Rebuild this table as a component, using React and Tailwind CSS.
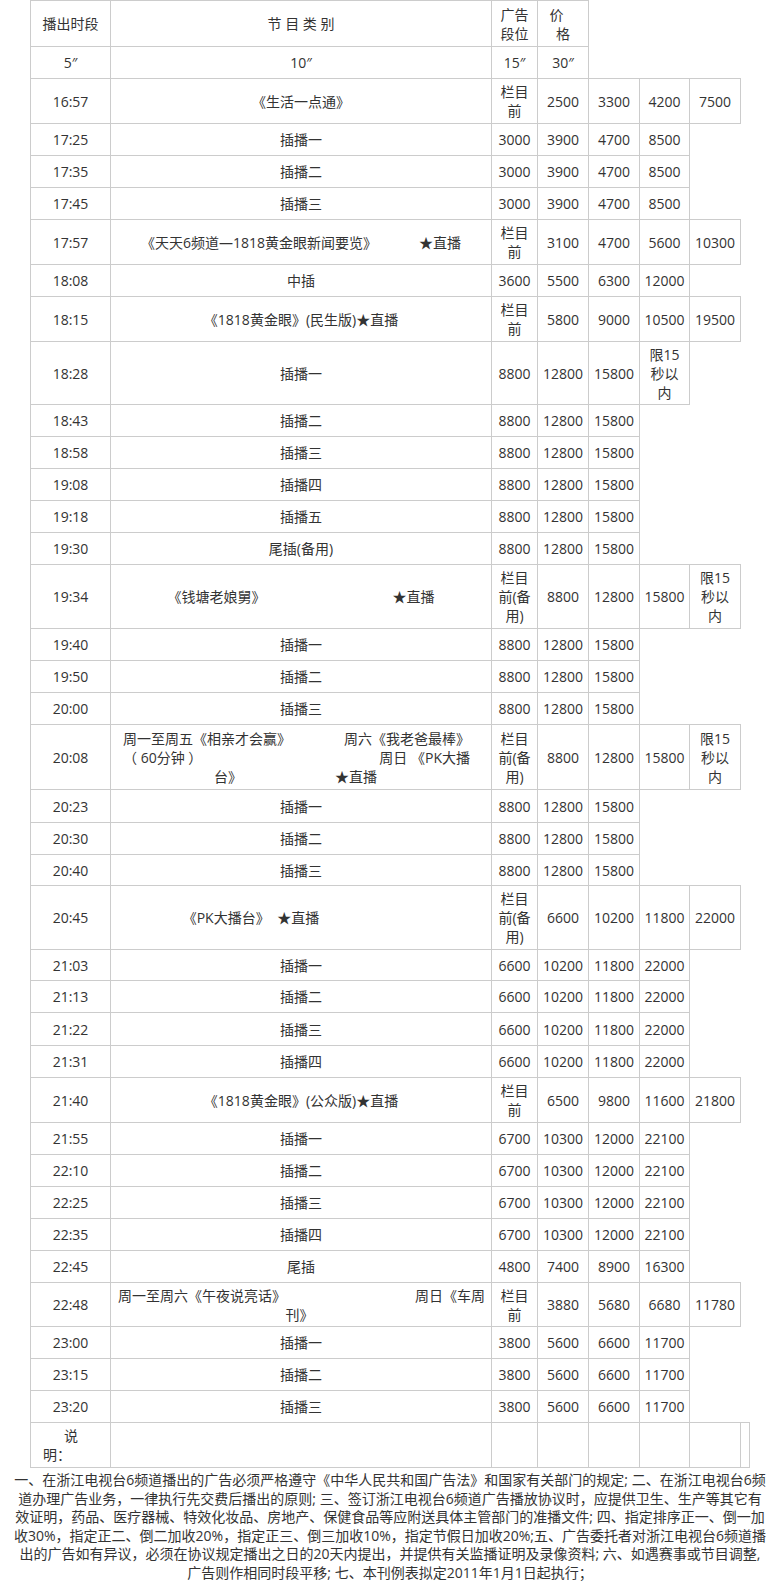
import React from 'react';

const font = { fontFamily: '"Open Sans", "Noto Sans CJK SC", sans-serif' };

const lanmu = (
  <>
    <div>栏目</div>
    <div>前</div>
  </>
);

const lanmuBy = (
  <>
    <div>栏目</div>
    <div>前(备</div>
    <div>用)</div>
  </>
);

const xian = (
  <>
    <div>限15</div>
    <div>秒以</div>
    <div>内</div>
  </>
);

const rows = [
  { t: '16:57', p: '《生活一点通》', c: [lanmu, '2500', '3300', '4200', '7500'], h: 45 },
  { t: '17:25', p: '插播一', c: ['3000', '3900', '4700', '8500'], h: 32 },
  { t: '17:35', p: '插播二', c: ['3000', '3900', '4700', '8500'], h: 32 },
  { t: '17:45', p: '插播三', c: ['3000', '3900', '4700', '8500'], h: 32 },
  {
    t: '17:57',
    p: (
      <>
        《天天6频道—1818黄金眼新闻要览》<span className="inline-block ml-[42px]">★直播</span>
      </>
    ),
    c: [lanmu, '3100', '4700', '5600', '10300'],
    h: 45,
  },
  { t: '18:08', p: '中插', c: ['3600', '5500', '6300', '12000'], h: 32 },
  { t: '18:15', p: '《1818黄金眼》(民生版)★直播', c: [lanmu, '5800', '9000', '10500', '19500'], h: 45 },
  { t: '18:28', p: '插播一', c: ['8800', '12800', '15800', xian], h: 63 },
  { t: '18:43', p: '插播二', c: ['8800', '12800', '15800'], h: 32 },
  { t: '18:58', p: '插播三', c: ['8800', '12800', '15800'], h: 32 },
  { t: '19:08', p: '插播四', c: ['8800', '12800', '15800'], h: 32 },
  { t: '19:18', p: '插播五', c: ['8800', '12800', '15800'], h: 32 },
  { t: '19:30', p: '尾插(备用)', c: ['8800', '12800', '15800'], h: 32 },
  {
    t: '19:34',
    p: (
      <>
        《钱塘老娘舅》<span className="inline-block ml-[127px]">★直播</span>
      </>
    ),
    c: [lanmuBy, '8800', '12800', '15800', xian],
    h: 64,
  },
  { t: '19:40', p: '插播一', c: ['8800', '12800', '15800'], h: 32 },
  { t: '19:50', p: '插播二', c: ['8800', '12800', '15800'], h: 32 },
  { t: '20:00', p: '插播三', c: ['8800', '12800', '15800'], h: 32 },
  {
    t: '20:08',
    p: (
      <div className="pl-[12px] pr-[21px]">
        <div className="flex justify-between">
          <span>周一至周五《相亲才会赢》</span>
          <span>周六《我老爸最棒》</span>
        </div>
        <div className="flex justify-between">
          <span>（ 60分钟 ）</span>
          <span>周日 《PK大播</span>
        </div>
        <div className="flex justify-center gap-[93px] pr-[2px]">
          <span>台》</span>
          <span>★直播</span>
        </div>
      </div>
    ),
    c: [lanmuBy, '8800', '12800', '15800', xian],
    h: 65,
  },
  { t: '20:23', p: '插播一', c: ['8800', '12800', '15800'], h: 33 },
  { t: '20:30', p: '插播二', c: ['8800', '12800', '15800'], h: 32 },
  { t: '20:40', p: '插播三', c: ['8800', '12800', '15800'], h: 31 },
  {
    t: '20:45',
    p: (
      <div className="pr-[100px]">
        《PK大播台》 <span className="inline-block ml-[4px]">★直播</span>
      </div>
    ),
    c: [lanmuBy, '6600', '10200', '11800', '22000'],
    h: 64,
  },
  { t: '21:03', p: '插播一', c: ['6600', '10200', '11800', '22000'], h: 31 },
  { t: '21:13', p: '插播二', c: ['6600', '10200', '11800', '22000'], h: 32 },
  { t: '21:22', p: '插播三', c: ['6600', '10200', '11800', '22000'], h: 33 },
  { t: '21:31', p: '插播四', c: ['6600', '10200', '11800', '22000'], h: 32 },
  { t: '21:40', p: '《1818黄金眼》(公众版)★直播', c: [lanmu, '6500', '9800', '11600', '21800'], h: 45 },
  { t: '21:55', p: '插播一', c: ['6700', '10300', '12000', '22100'], h: 32 },
  { t: '22:10', p: '插播二', c: ['6700', '10300', '12000', '22100'], h: 32 },
  { t: '22:25', p: '插播三', c: ['6700', '10300', '12000', '22100'], h: 32 },
  { t: '22:35', p: '插播四', c: ['6700', '10300', '12000', '22100'], h: 32 },
  { t: '22:45', p: '尾插', c: ['4800', '7400', '8900', '16300'], h: 32 },
  {
    t: '22:48',
    p: (
      <div className="pl-[7px] pr-[6px]">
        <div className="flex justify-between">
          <span>周一至周六《午夜说亮话》</span>
          <span>周日《车周</span>
        </div>
        <div className="text-center pr-[4px]">刊》</div>
      </div>
    ),
    c: [lanmu, '3880', '5680', '6680', '11780'],
    h: 44,
  },
  { t: '23:00', p: '插播一', c: ['3800', '5600', '6600', '11700'], h: 32 },
  { t: '23:15', p: '插播二', c: ['3800', '5600', '6600', '11700'], h: 32 },
  { t: '23:20', p: '插播三', c: ['3800', '5600', '6600', '11700'], h: 32 },
];

const notes = [
  '一、在浙江电视台6频道播出的广告必须严格遵守《中华人民共和国广告法》和国家有关部门的规定; 二、在浙江电视台6频',
  '道办理广告业务，一律执行先交费后播出的原则; 三、签订浙江电视台6频道广告播放协议时，应提供卫生、生产等其它有',
  '效证明，药品、医疗器械、特效化妆品、房地产、保健食品等应附送具体主管部门的准播文件; 四、指定排序正一、倒一加',
  '收30%，指定正二、倒二加收20%，指定正三、倒三加收10%，指定节假日加收20%;五、广告委托者对浙江电视台6频道播',
  '出的广告如有异议，必须在协议规定播出之日的20天内提出，并提供有关监播证明及录像资料; 六、如遇赛事或节目调整,',
  '广告则作相同时段平移; 七、本刊例表拟定2011年1月1日起执行；',
];

const td = 'border border-[#cccccc] p-0 text-center align-middle';

const App = () => {
  return (
    <div className="bg-white text-[#333333] text-[14px] leading-[19px] w-[780px]" style={font}>
      <table className="table-fixed border-collapse ml-[30px] w-[719px]">
        <colgroup>
          <col className="w-[80px]" />
          <col className="w-[381px]" />
          <col className="w-[46px]" />
          <col className="w-[51px]" />
          <col className="w-[51px]" />
          <col className="w-[50px]" />
          <col className="w-[51px]" />
          <col className="w-[9px]" />
        </colgroup>
        <tbody>
          <tr className="h-[46px]">
            <td className={td}>播出时段</td>
            <td className={td}>节 目 类 别</td>
            <td className={td}>
              <div>广告</div>
              <div>段位</div>
            </td>
            <td className={td}>
              <div className="pr-[13px]">价</div>
              <div>格</div>
            </td>
          </tr>
          <tr className="h-[32px]">
            <td className={td}>5″</td>
            <td className={td}>10″</td>
            <td className={td}>15″</td>
            <td className={td}>30″</td>
          </tr>
          {rows.map((r) => (
            <tr key={r.t} style={{ height: r.h }}>
              <td className={td}>{r.t}</td>
              <td className={td}>{r.p}</td>
              {r.c.map((v, i) => (
                <td key={i} className={td}>
                  {v}
                </td>
              ))}
            </tr>
          ))}
          <tr className="h-[45px]">
            <td className={`${td} !text-left pl-[6px]`}>
              <div className="pl-[27px]">说</div>
              <div className="pl-[6px]">明：</div>
            </td>
            <td className={td}></td>
            <td className={td}></td>
            <td className={td}></td>
            <td className={td}></td>
            <td className={td}></td>
            <td className={td}></td>
            <td className={td}></td>
          </tr>
        </tbody>
      </table>

      <div className="mt-[3px] text-center leading-[18.6px] whitespace-nowrap">
        {notes.map((line) => (
          <div key={line}>{line}</div>
        ))}
      </div>
    </div>
  );
};

export default App;
